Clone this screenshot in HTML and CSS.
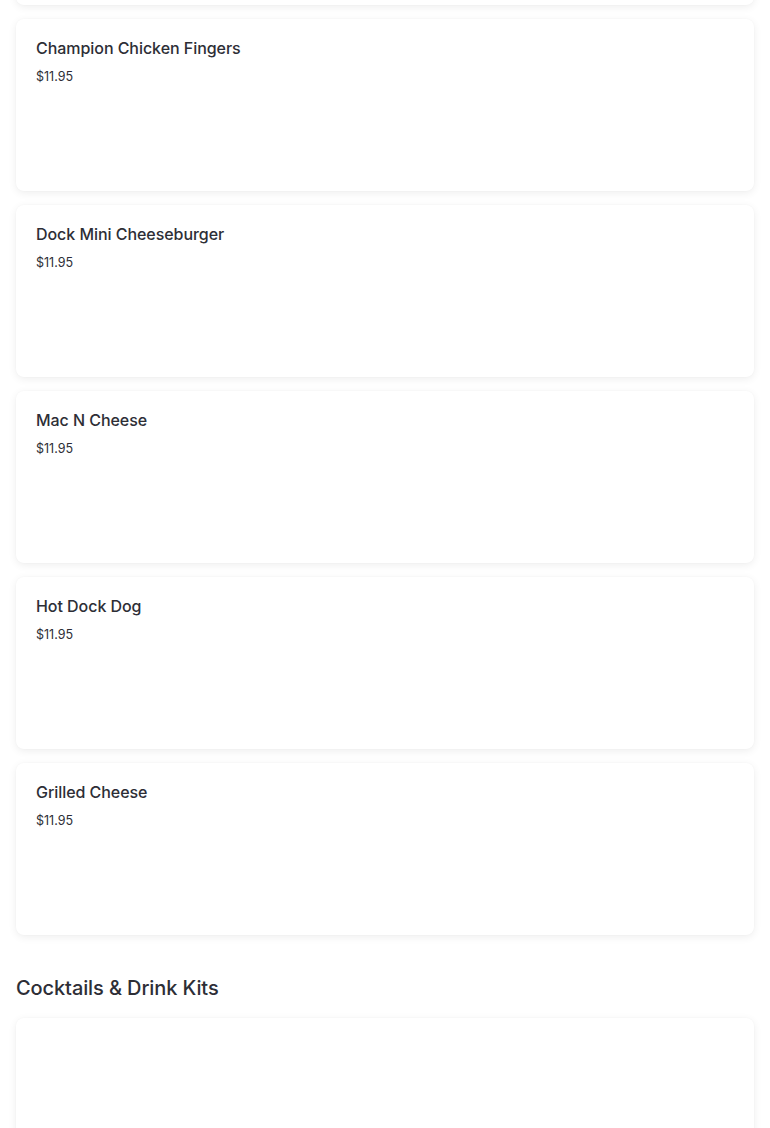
FILE: index.html
```html
<!DOCTYPE html>
<html>
<head>
<meta charset="utf-8">
<link rel="stylesheet" href="styles.css">
</head>
<body>
<main class="menu">
  <section class="category">
    <div class="items">
      <div class="card"></div>
      <div class="card"><div class="name">Champion Chicken Fingers</div><div class="price">$11.95</div></div>
      <div class="card"><div class="name">Dock Mini Cheeseburger</div><div class="price">$11.95</div></div>
      <div class="card"><div class="name">Mac N Cheese</div><div class="price">$11.95</div></div>
      <div class="card"><div class="name">Hot Dock Dog</div><div class="price">$11.95</div></div>
      <div class="card"><div class="name">Grilled Cheese</div><div class="price">$11.95</div></div>
    </div>
  </section>
  <section class="category">
    <h2 class="cat-title">Cocktails &amp; Drink Kits</h2>
    <div class="items">
      <div class="card"></div>
    </div>
  </section>
</main>
</body>
</html>
```
FILE: styles.css
```css
html, body {
  margin: 0;
  padding: 0;
  background: #ffffff;
  overflow: hidden;
}
body {
  font-family: "Inter", "Lato", sans-serif;
  color: #2d2e36;
}
.menu {
  padding: 0 16px;
  margin-top: -167px;
}
.items {
  display: flex;
  flex-direction: column;
  gap: 14px;
}
.card {
  height: 172px;
  box-sizing: border-box;
  padding: 18px 20px;
  background: #fff;
  border-radius: 8px;
  box-shadow: 0 2px 8px rgba(0, 0, 0, 0.07), 0 0 2px rgba(0, 0, 0, 0.03);
}
.name {
  font-size: 16px;
  line-height: 22px;
  font-weight: 500;
  letter-spacing: -0.05px;
}
.price {
  margin-top: 9px;
  font-size: 12.5px;
  line-height: 18px;
  font-weight: 400;
}
.cat-title {
  margin: 39px 0 16px;
  font-size: 20px;
  line-height: 28px;
  font-weight: 500;
  letter-spacing: -0.1px;
}
```
